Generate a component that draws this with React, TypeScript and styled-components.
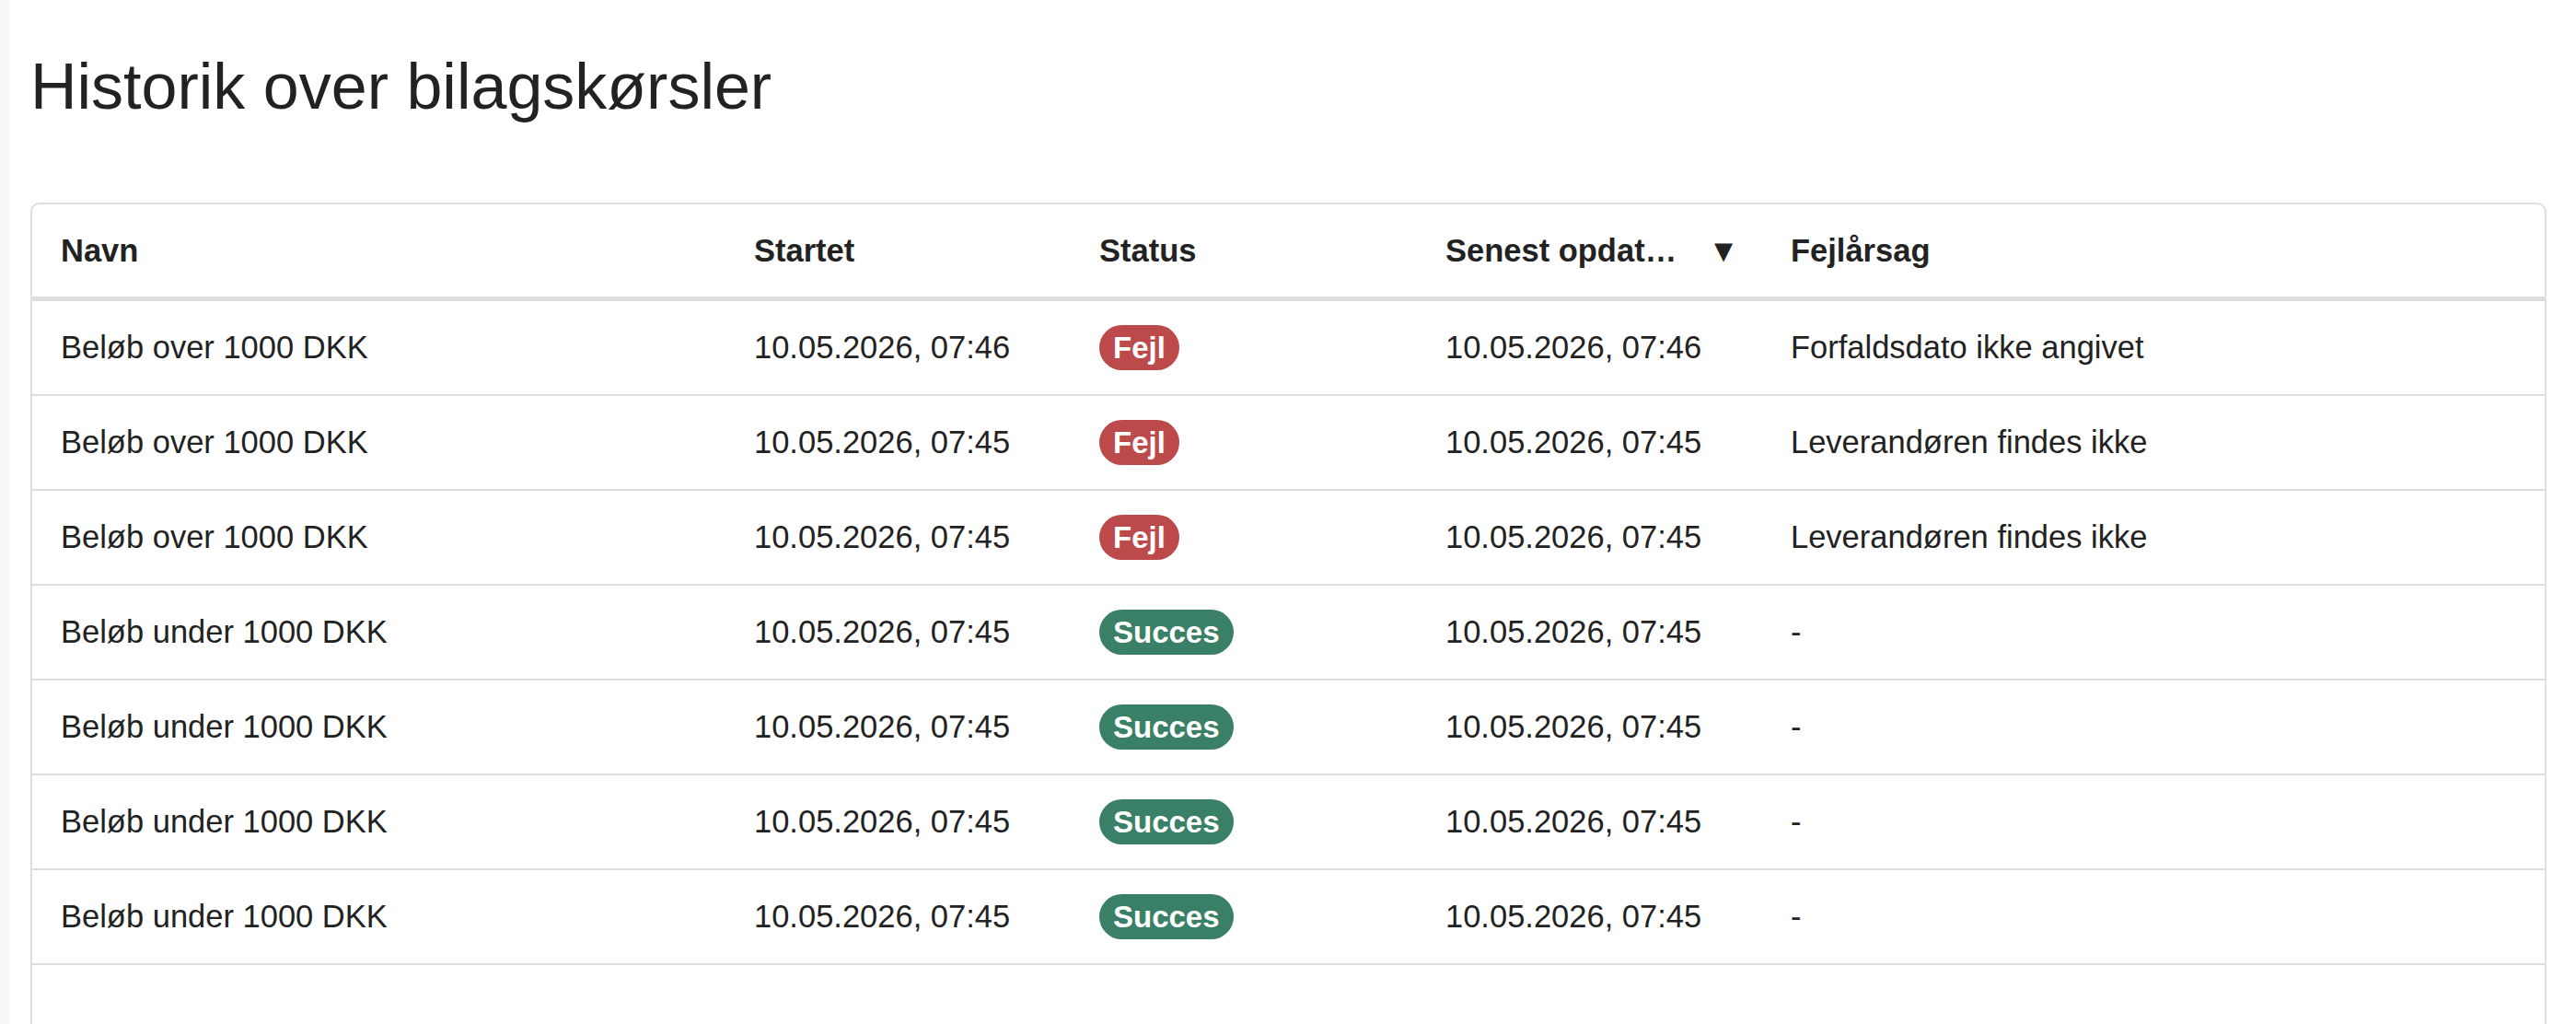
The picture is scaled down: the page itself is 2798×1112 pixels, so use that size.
import React from "react";
import styled, { createGlobalStyle } from "styled-components";

const GlobalStyle = createGlobalStyle`
  html, body {
    margin: 0;
    padding: 0;
    background: #fff;
    font-family: "Liberation Sans", Arial, sans-serif;
    color: #222;
  }
`;

const Page = styled.div`
  border-left: 10px solid #f7f7f7;
  padding: 44px 32px 0 23px;
  height: 1112px;
  box-sizing: border-box;
  overflow: hidden;
`;

const Title = styled.h1`
  margin: 0 0 76px;
  font-size: 70px;
  font-weight: 400;
  line-height: 100px;
  color: #222;
`;

const Card = styled.div`
  border: 2px solid #dedede;
  border-radius: 10px;
  height: 1000px;
`;

const Table = styled.table`
  width: 100%;
  border-collapse: collapse;
  table-layout: fixed;
  font-size: 34.5px;
`;

const Th = styled.th<{ $w?: number }>`
  width: ${({ $w }) => ($w ? `${$w}px` : "auto")};
  height: 100px;
  padding: 0 31px;
  text-align: left;
  font-weight: 700;
  color: #222;
  border-bottom: 5px solid #dddddd;
  white-space: nowrap;
`;

const HeadInner = styled.div`
  display: flex;
  align-items: center;
  justify-content: space-between;
  gap: 16px;
`;

const Ellipsis = styled.span`
  overflow: hidden;
  text-overflow: ellipsis;
  white-space: nowrap;
  min-width: 0;
`;

const SortArrow = styled.span`
  font-size: 34px;
  flex-shrink: 0;
  margin-right: -6px;
`;

const Td = styled.td`
  height: 101px;
  padding: 0 31px;
  border-bottom: 2px solid #dddddd;
  color: #222;
  white-space: nowrap;
`;

const Badge = styled.span<{ $ok: boolean }>`
  display: inline-block;
  padding: 0 15px;
  height: 49px;
  line-height: 49px;
  border-radius: 25px;
  font-size: 33px;
  font-weight: 700;
  color: #fff;
  background: ${({ $ok }) => ($ok ? "#3a8066" : "#bd4a4a")};
`;

const rows = [
  { name: "Beløb over 1000 DKK", start: "10.05.2026, 07:46", ok: false, upd: "10.05.2026, 07:46", reason: "Forfaldsdato ikke angivet" },
  { name: "Beløb over 1000 DKK", start: "10.05.2026, 07:45", ok: false, upd: "10.05.2026, 07:45", reason: "Leverandøren findes ikke" },
  { name: "Beløb over 1000 DKK", start: "10.05.2026, 07:45", ok: false, upd: "10.05.2026, 07:45", reason: "Leverandøren findes ikke" },
  { name: "Beløb under 1000 DKK", start: "10.05.2026, 07:45", ok: true, upd: "10.05.2026, 07:45", reason: "-" },
  { name: "Beløb under 1000 DKK", start: "10.05.2026, 07:45", ok: true, upd: "10.05.2026, 07:45", reason: "-" },
  { name: "Beløb under 1000 DKK", start: "10.05.2026, 07:45", ok: true, upd: "10.05.2026, 07:45", reason: "-" },
  { name: "Beløb under 1000 DKK", start: "10.05.2026, 07:45", ok: true, upd: "10.05.2026, 07:45", reason: "-" },
];

export default function App() {
  return (
    <>
      <GlobalStyle />
      <Page>
        <Title>Historik over bilagskørsler</Title>
        <Card>
          <Table>
            <thead>
              <tr>
                <Th $w={691}>Navn</Th>
                <Th $w={313}>Startet</Th>
                <Th $w={314}>Status</Th>
                <Th $w={313}>
                  <HeadInner>
                    <Ellipsis>Senest opdateret</Ellipsis>
                    <SortArrow>▼</SortArrow>
                  </HeadInner>
                </Th>
                <Th>Fejlårsag</Th>
              </tr>
            </thead>
            <tbody>
              {rows.map((r, i) => (
                <tr key={i}>
                  <Td>{r.name}</Td>
                  <Td>{r.start}</Td>
                  <Td>
                    <Badge $ok={r.ok}>{r.ok ? "Succes" : "Fejl"}</Badge>
                  </Td>
                  <Td>{r.upd}</Td>
                  <Td>{r.reason}</Td>
                </tr>
              ))}
            </tbody>
          </Table>
        </Card>
      </Page>
    </>
  );
}
